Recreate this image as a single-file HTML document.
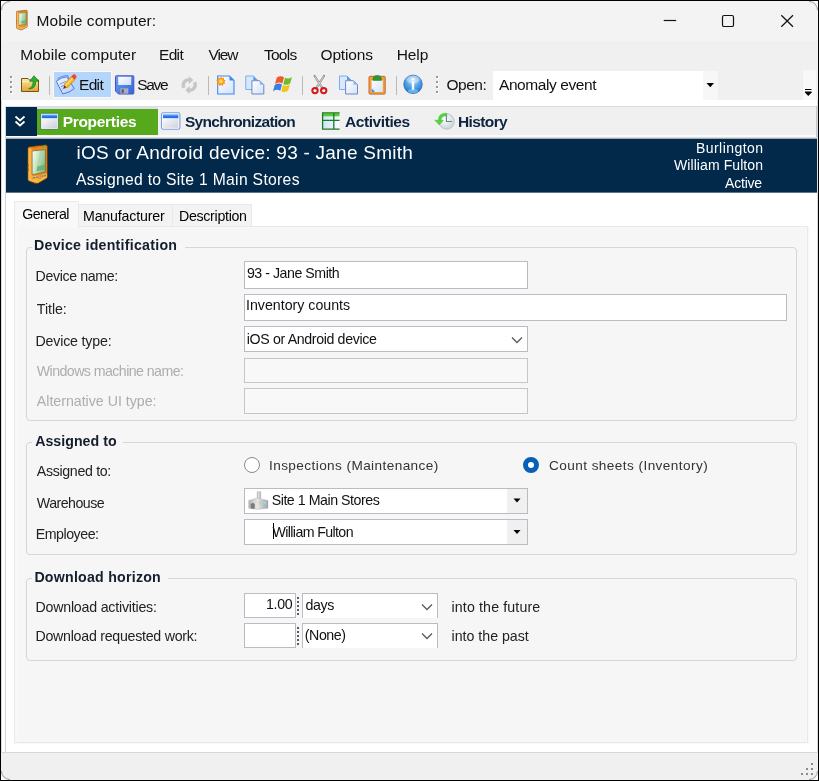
<!DOCTYPE html>
<html lang="en"><head><meta charset="utf-8"><title>Mobile computer:</title>
<style>
html,body{margin:0;padding:0}
body{width:819px;height:781px;position:relative;overflow:hidden;background:#000;font-family:"Liberation Sans",sans-serif}
.a{position:absolute;box-sizing:border-box}
.t{position:absolute;white-space:pre;line-height:1;font-family:"Liberation Sans",sans-serif}
svg{position:absolute;overflow:visible}
.inp{position:absolute;box-sizing:border-box;background:#fff;border:1px solid #b9bcc3}
.dis{background:#f8f8f8;border-color:#c4c6ca}
.grp{position:absolute;box-sizing:border-box;border:1px solid #d3d6db;border-radius:4px}
.gl{position:absolute;background:#f6f6f6;height:3px}
.sep{position:absolute;width:1px;background:#b9b9b9;top:76px;height:19px}
.dd{position:absolute;box-sizing:border-box;background:#f0f0f0}

</style></head>
<body>
<!-- outer white + window -->
<div class="a" style="left:1px;top:1px;width:817px;height:779px;background:#fff"></div>
<div class="a" id="win" style="left:1px;top:1px;width:817px;height:779px;border-radius:8px;background:#fff;overflow:hidden;box-shadow:inset 0 0 0 1px rgba(120,125,135,.28)">
  <div class="a" style="left:0;top:0;width:817px;height:40px;background:#f3f3f3"></div>
  <div class="a" style="left:0;top:40px;width:817px;height:59px;background:#f0f0f0"></div>
  <div class="a" style="left:0;top:752px;width:817px;height:27px;background:#f0f0f0"></div>
</div>
<svg style="left:0;top:0" width="819" height="781" viewBox="0 0 819 781"><g fill="none" stroke="#9aa0a8" stroke-width="1">
<path d="M1.500 10A8.500 8.500 0 0 1 10 1.500"/><path d="M809 1.500A8.500 8.500 0 0 1 817.500 10"/><path d="M817.500 771A8.500 8.500 0 0 1 809 779.500"/><path d="M10 779.500A8.500 8.500 0 0 1 1.500 771"/></g></svg>
<!-- window controls -->
<svg style="left:0;top:0" width="819" height="40" viewBox="0 0 819 40">
  <path d="M663.700 20.500H676.200" stroke="#111" stroke-width="1.200" fill="none"/>
  <rect x="722.500" y="15.500" width="11" height="11" rx="1.600" fill="none" stroke="#111" stroke-width="1.200"/>
  <path d="M781.300 15.300 793 26.700M793 15.300 781.300 26.700" stroke="#111" stroke-width="1.200" fill="none"/>
</svg>
<!-- toolbar -->
<div class="a" style="left:53px;top:71px;width:59px;height:27px;background:#b3d6fa;border:1px solid #f6fafe"></div>
<div class="sep" style="left:49px"></div>
<div class="sep" style="left:208px"></div>
<div class="sep" style="left:302px"></div>
<div class="sep" style="left:396px"></div>
<div class="a" style="left:493px;top:71px;width:210px;height:29px;background:#fff"></div>
<div class="a" style="left:703px;top:71px;width:15px;height:29px;background:#f7f7f7"></div>
<div class="a" style="left:803px;top:70px;width:13px;height:30px;background:#f8f8f8"></div>
<svg style="left:0;top:0" width="819" height="110" viewBox="0 0 819 110">
  <!-- grips -->
  <g fill="#fff"><rect x="11" y="77" width="2" height="2"/><rect x="11" y="82" width="2" height="2"/><rect x="11" y="87" width="2" height="2"/><rect x="11" y="92" width="2" height="2"/>
  <rect x="437" y="77" width="2" height="2"/><rect x="437" y="82" width="2" height="2"/><rect x="437" y="87" width="2" height="2"/><rect x="437" y="92" width="2" height="2"/></g>
  <g fill="#9a9a9a"><rect x="10" y="76" width="2" height="2"/><rect x="10" y="81" width="2" height="2"/><rect x="10" y="86" width="2" height="2"/><rect x="10" y="91" width="2" height="2"/>
  <rect x="436" y="76" width="2" height="2"/><rect x="436" y="81" width="2" height="2"/><rect x="436" y="86" width="2" height="2"/><rect x="436" y="91" width="2" height="2"/></g>
  <path d="M706.500 83h7.500l-3.750 4.200z" fill="#000"/>
  <path d="M805 89.500h6.500M805 92h6.500l-3.250 3.500z" stroke="#000" stroke-width="1" fill="#000"/>
</svg>
<!-- tab strip -->
<div class="a" style="left:5px;top:106px;width:1px;height:647px;background:#cfd5dc"></div>
<div class="a" style="left:5px;top:106px;width:812px;height:1px;background:#d9dce2"></div>
<div class="a" style="left:6px;top:107px;width:810px;height:28px;background:#f0f0f0"></div>
<div class="a" style="left:6px;top:135px;width:810px;height:2px;background:#fbfbfb"></div>
<div class="a" style="left:816px;top:106px;width:1px;height:32px;background:#c5cad1"></div>
<div class="a" style="left:6px;top:107px;width:31px;height:29px;background:#02284a"></div>
<div class="a" style="left:37px;top:107px;width:121px;height:2px;background:#dfdfe6"></div>
<div class="a" style="left:37px;top:109px;width:121px;height:26px;background:#56a81c"></div>
<div class="a" style="left:6px;top:137px;width:811px;height:1px;background:#dcdcde"></div>
<div class="a" style="left:6px;top:138px;width:811px;height:1px;background:#a4acb6"></div>
<div class="a" style="left:6px;top:139px;width:811px;height:53px;background:#02284a"></div>
<div class="a" style="left:6px;top:192px;width:811px;height:1px;background:#60748a"></div>
<svg style="left:14px;top:114px" width="12" height="14" viewBox="0 0 12 14"><path d="M1.500 2.500l4.500 4 4.500-4M1.500 7.500l4.500 4 4.500-4" stroke="#fff" stroke-width="1.700" fill="none"/></svg>
<!-- page tabs -->
<div class="a" style="left:78px;top:204px;width:95px;height:23px;background:#f3f3f3;border:1px solid #e9e9e9;border-bottom:none"></div>
<div class="a" style="left:172px;top:204px;width:80px;height:23px;background:#f3f3f3;border:1px solid #e9e9e9;border-bottom:none"></div>
<div class="a" style="left:14px;top:226px;width:796px;height:518px;background:#f9f9f9"></div>
<div class="a" style="left:14px;top:226px;width:794px;height:517px;background:#f8f8f8;border:1px solid #e9e9e9"></div>
<div class="a" style="left:18px;top:228px;width:788px;height:513px;background:#f6f6f6"></div>
<div class="a" style="left:14px;top:201px;width:65px;height:27px;background:#f8f8f8;border:1px solid #e9e9e9;border-bottom:none"></div>
<!-- status bar -->
<div class="a" style="left:2px;top:752px;width:815px;height:1px;background:#d3d8de"></div>
<svg style="left:800px;top:762px" width="14" height="14" viewBox="0 0 14 14"><g fill="#8a8a8a"><rect x="11" y="1" width="2" height="2"/><rect x="6" y="6" width="2" height="2"/><rect x="11" y="6" width="2" height="2"/><rect x="1" y="11" width="2" height="2"/><rect x="6" y="11" width="2" height="2"/><rect x="11" y="11" width="2" height="2"/></g></svg>
<!-- group boxes -->
<div class="grp" style="left:26px;top:247px;width:771px;height:174px"></div>
<div class="gl" style="left:32px;top:246px;width:153px"></div>
<div class="grp" style="left:26px;top:442px;width:771px;height:113px"></div>
<div class="gl" style="left:32px;top:441px;width:91px"></div>
<div class="grp" style="left:26px;top:578px;width:771px;height:83px"></div>
<div class="gl" style="left:32px;top:577px;width:136px"></div>
<!-- inputs -->
<div class="inp" style="left:244px;top:261px;width:284px;height:28px"></div>
<div class="inp" style="left:244px;top:294px;width:543px;height:27px"></div>
<div class="inp" style="left:244px;top:326px;width:284px;height:26px"></div>
<div class="inp dis" style="left:244px;top:358px;width:284px;height:25px"></div>
<div class="inp dis" style="left:244px;top:388px;width:284px;height:26px"></div>
<svg style="left:511px;top:336px" width="12" height="8" viewBox="0 0 12 8"><path d="M1 1.500l5 5 5-5" stroke="#5a5a5a" stroke-width="1.300" fill="none"/></svg>
<!-- radios -->
<div class="a" style="left:244px;top:457px;width:16px;height:16px;border-radius:50%;border:1px solid #8a8a8a;background:#fff"></div>
<div class="a" style="left:523px;top:457px;width:16px;height:16px;border-radius:50%;border:5px solid #0560b6;background:#fff"></div>
<!-- combos -->
<div class="inp" style="left:244px;top:488px;width:284px;height:26px"></div>
<div class="dd" style="left:507px;top:489px;width:20px;height:24px"></div>
<div class="inp" style="left:244px;top:519px;width:284px;height:26px"></div>
<div class="dd" style="left:507px;top:520px;width:20px;height:24px"></div>
<svg style="left:513px;top:498px" width="8" height="36" viewBox="0 0 8 36"><path d="M0.500 0.500h7l-3.500 4zM0.500 32h7l-3.500 4z" fill="#000"/></svg>
<div class="a" style="left:273px;top:523px;width:1px;height:16px;background:#000"></div>
<!-- numeric + unit -->
<div class="inp" style="left:244px;top:593px;width:52px;height:25px"></div>
<div class="inp" style="left:244px;top:623px;width:52px;height:25px"></div>
<div class="a" style="left:302px;top:593px;width:136px;height:25px;background:#fff;border:1px solid #b9bcc3;border-bottom:none"></div>
<div class="a" style="left:302px;top:623px;width:136px;height:25px;background:#fff;border:1px solid #b9bcc3;border-bottom:none"></div>
<svg style="left:296px;top:595px" width="4" height="52" viewBox="0 0 4 52"><g fill="#5c5c5c"><rect x="1" y="2" width="2" height="2"/><rect x="1" y="6" width="2" height="2"/><rect x="1" y="10" width="2" height="2"/><rect x="1" y="14" width="2" height="2"/><rect x="1" y="18" width="2" height="2"/>
<rect x="1" y="32" width="2" height="2"/><rect x="1" y="36" width="2" height="2"/><rect x="1" y="40" width="2" height="2"/><rect x="1" y="44" width="2" height="2"/><rect x="1" y="48" width="2" height="2"/></g></svg>
<svg style="left:421px;top:603px" width="12" height="38" viewBox="0 0 12 38"><path d="M1 1.500l5 5 5-5M1 30.500l5 5 5-5" stroke="#5a5a5a" stroke-width="1.300" fill="none"/></svg>
<svg style="left:0;top:0" width="819" height="781" viewBox="0 0 819 781">
<defs>
  <linearGradient id="pb" x1="0" x2="1" y1="0" y2="0"><stop offset="0" stop-color="#f9b040"/><stop offset=".22" stop-color="#f39a26"/><stop offset=".3" stop-color="#ec8618"/><stop offset="1" stop-color="#ee8e1e"/></linearGradient>
  <linearGradient id="ps" x1="0" y1="0" x2="1" y2=".45"><stop offset="0" stop-color="#fbfffa"/><stop offset=".45" stop-color="#c9e8c6"/><stop offset="1" stop-color="#86bf8a"/></linearGradient>
  <linearGradient id="edp" x1="0" y1="0" x2="1" y2="1"><stop offset="0" stop-color="#f4f8ff"/><stop offset="1" stop-color="#b4c8f2"/></linearGradient>
  <linearGradient id="fold" x1="0" y1="0" x2="0" y2="1"><stop offset="0" stop-color="#fbeaa8"/><stop offset="1" stop-color="#dfa42c"/></linearGradient>
  <linearGradient id="sv" x1="0" y1="0" x2="1" y2="1"><stop offset="0" stop-color="#6ea0f8"/><stop offset="1" stop-color="#3464d8"/></linearGradient>
  <linearGradient id="svl" x1="0" y1="0" x2="1" y2="1"><stop offset="0" stop-color="#ffffff"/><stop offset="1" stop-color="#cfdcf6"/></linearGradient>
  <linearGradient id="pg" x1="0" y1="0" x2="1" y2="1"><stop offset="0" stop-color="#ffffff"/><stop offset="1" stop-color="#d2e2fa"/></linearGradient>
  <linearGradient id="wt" x1="0" y1="0" x2="0" y2="1"><stop offset="0" stop-color="#8cc0ff"/><stop offset=".5" stop-color="#2a7af0"/><stop offset="1" stop-color="#1864e0"/></linearGradient>
  <linearGradient id="wb" x1="0" y1="0" x2="1" y2="1"><stop offset="0" stop-color="#fafafc"/><stop offset="1" stop-color="#cfcfde"/></linearGradient>
  <linearGradient id="tc" x1="0" y1="0" x2="1" y2="0"><stop offset="0" stop-color="#cfe3fb"/><stop offset="1" stop-color="#fafcff"/></linearGradient>
  <radialGradient id="inf" cx=".5" cy=".3" r=".75"><stop offset="0" stop-color="#cfe6f9"/><stop offset=".45" stop-color="#5aa8ea"/><stop offset=".8" stop-color="#2a80d8"/><stop offset="1" stop-color="#1c62b4"/></radialGradient>
  <radialGradient id="clk" cx=".4" cy=".35" r=".7"><stop offset="0" stop-color="#ffffff"/><stop offset="1" stop-color="#c8d2d8"/></radialGradient>
  <radialGradient id="sun" cx=".5" cy=".5" r=".5"><stop offset="0" stop-color="#fff6a0"/><stop offset=".45" stop-color="#ffc83a"/><stop offset="1" stop-color="#ff8c14"/></radialGradient>
  <linearGradient id="wh" x1="0" y1="0" x2="1" y2="0"><stop offset="0" stop-color="#b2b2b2"/><stop offset=".45" stop-color="#e6e6e6"/><stop offset="1" stop-color="#a2a2a2"/></linearGradient>
    </defs>
<!-- title icon -->
<g transform="translate(16 10) scale(.535 .5)">
    <path d="M1 3.700Q1 2.700 2 2.500L19 .500Q21 .300 21 2V33Q21 34 20 34.600L11.500 39.300Q10 40 8 39.400L2 37Q1 36.600 1 35.600Z" fill="url(#pb)" stroke="#6e3a06" stroke-width="1"/>
    <path d="M1.500 4 4.700 4.500V37.600L1.500 36.200Z" fill="#fab648"/>
    <path d="M4.700 32.500 20.600 29.800V33.600L11 39 4.700 37.600Z" fill="#f7b545"/>
    <path d="M2 2.900 19.200 .900 20.600 2.200 4.700 4.300Z" fill="#e07c14"/>
    <path d="M5.300 6.600 19 5.300V28L5.300 30.600Z" fill="url(#ps)" stroke="#6a5232" stroke-width=".6"/>
    <path d="M9.800 27.200 18.600 25.300V20.600L10.600 22.200Z" fill="#6aae70" opacity=".85"/>
    <path d="M13.500 7 10.500 22 12 22 15.500 6.800Z" fill="#a4d6a6" opacity=".8"/>
    <rect x="15.600" y="1.800" width="3" height="1.900" fill="#58c040" transform="rotate(-6 17 2.700)"/>
    <path d="M5.800 33.400l2.600-.5v1.300l-2.600.5zM9.200 32.800l2.200-.4v1.300l-2.200.4zM15 31.600l2-.4v1.300l-2 .4zM17.600 31.100l2-.4v1.300l-2 .4z" fill="#8a6a7a"/>
    <path d="M12 31.600l2.200-.4v3.400l-2.200.4z" fill="#d8a050" stroke="#a87020" stroke-width=".3"/>
    <path d="M1.200 20v2.500M1.200 24.500v2.500" stroke="#7a4a10" stroke-width=".8"/>
</g>
<!-- header icon -->
<g transform="translate(27 144.500) scale(.97 .985)">
    <path d="M1 3.700Q1 2.700 2 2.500L19 .500Q21 .300 21 2V33Q21 34 20 34.600L11.500 39.300Q10 40 8 39.400L2 37Q1 36.600 1 35.600Z" fill="url(#pb)" stroke="#6e3a06" stroke-width="1"/>
    <path d="M1.500 4 4.700 4.500V37.600L1.500 36.200Z" fill="#fab648"/>
    <path d="M4.700 32.500 20.600 29.800V33.600L11 39 4.700 37.600Z" fill="#f7b545"/>
    <path d="M2 2.900 19.200 .900 20.600 2.200 4.700 4.300Z" fill="#e07c14"/>
    <path d="M5.300 6.600 19 5.300V28L5.300 30.600Z" fill="url(#ps)" stroke="#6a5232" stroke-width=".6"/>
    <path d="M9.800 27.200 18.600 25.300V20.600L10.600 22.200Z" fill="#6aae70" opacity=".85"/>
    <path d="M13.500 7 10.500 22 12 22 15.500 6.800Z" fill="#a4d6a6" opacity=".8"/>
    <rect x="15.600" y="1.800" width="3" height="1.900" fill="#58c040" transform="rotate(-6 17 2.700)"/>
    <path d="M5.800 33.400l2.600-.5v1.300l-2.600.5zM9.200 32.800l2.200-.4v1.300l-2.200.4zM15 31.600l2-.4v1.300l-2 .4zM17.600 31.100l2-.4v1.300l-2 .4z" fill="#8a6a7a"/>
    <path d="M12 31.600l2.200-.4v3.400l-2.200.4z" fill="#d8a050" stroke="#a87020" stroke-width=".3"/>
    <path d="M1.200 20v2.500M1.200 24.500v2.500" stroke="#7a4a10" stroke-width=".8"/>
</g>
<!-- folder up -->
<path d="M21.500 78.500H28L29.500 80H38.500V91.500H21.500Z" fill="url(#fold)" stroke="#73560f" stroke-width="1"/>
<path d="M22 81.500H38" stroke="#fff6cc" stroke-width="1" opacity=".8"/>
<path d="M28.600 88.800Q33 87.800 33.200 81.300H29.600L34 75.700 38.800 81.300H35.800Q35.800 89.300 28.600 88.800Z" fill="#2fae2f" stroke="#17791a" stroke-width=".7"/>
<!-- edit icon -->
<path d="M57.800 78.600Q62 75.600 67.600 75.400L72 86.500Q67 88.500 62.500 91.500Z" fill="#c4d4f6" stroke="#5a80e4" stroke-width=".9"/>
<path d="M56.300 81.300Q61 77.200 66.800 76.800L74.300 88.600Q69.500 92.800 62.800 94Z" fill="url(#edp)" stroke="#4f78e2" stroke-width="1"/>
<path d="M59.800 84.200l6-2.700M61 86.700l6.200-2.800M62.300 89.200l6.200-2.800" stroke="#7396ea" stroke-width="1"/>
<path d="M63.600 88.300 64.600 84 71.300 76.600 74.800 79.800 68 87.200Z" fill="#f9b61c" stroke="#c87c0c" stroke-width=".6"/>
<path d="M65.700 85.600 72.600 78.100" stroke="#ffe58e" stroke-width="1.100"/>
<path d="M71.300 76.600 73.200 74.600Q74.400 73.800 75.700 74.900 77 76.200 76.300 77.600L74.800 79.800Z" fill="#f0452e"/>
<path d="M63.600 88.300 64.300 85.400 66.300 87.300Z" fill="#2c2c2c"/>
<!-- save -->
<path d="M115.500 76.500Q115.500 75.800 116.200 75.800H133Q133.800 75.800 133.800 76.500V93.300Q133.800 94 133 94H118.500L115.500 91Z" fill="url(#sv)" stroke="#4452c4" stroke-width="1"/>
<rect x="118.200" y="76.800" width="13" height="8.200" fill="url(#svl)"/>
<rect x="120.300" y="88.300" width="8" height="5.300" fill="#a9adbc"/>
<rect x="121.600" y="89.300" width="2.200" height="3.600" fill="#585c70"/>
<!-- refresh disabled -->
<g fill="#c6c6c6">
<path d="M182.300 88.500A7 7 0 0 1 188.800 78.300V76L193.300 80 188.800 84V81.600A3.600 3.600 0 0 0 185.600 87.300Z"/>
<path d="M196.200 81.500A7 7 0 0 1 189.700 91.700V94L185.200 90 189.700 86V88.400A3.600 3.600 0 0 0 192.900 82.700Z"/>
</g>
<!-- new doc -->
<path d="M217.700 76H229.500L234 80.500V94H217.700Z" fill="url(#pg)" stroke="#3b88f2" stroke-width="1.100"/>
<path d="M229.500 76V80.500H234Z" fill="#3b88f2"/>
<path d="M221 76.300l1 2 2.100-.8-.4 2.200 2.100.7-1.600 1.500 1.200 1.900-2.200.1-.3 2.200-1.900-1.200-1.900 1.200-.3-2.200-2.200-.1 1.200-1.900-1.600-1.500 2.100-.7-.4-2.200 2.100.8z" fill="#ff9418"/>
<circle cx="221" cy="81.300" r="3.300" fill="url(#sun)"/>
<!-- copy icons -->
<g transform="translate(245.300 75.500)">
    <path d="M.500 .500H8L12 4.500V14H.500Z" fill="#dbe8fc" stroke="#76aef2" stroke-width="1"/>
    <path d="M8 .500V4.500H12Z" fill="#5c9af0"/>
    <path d="M6.600 5.200H14.500L18.500 9.200V18.500H6.600Z" fill="url(#pg)" stroke="#6d88c4" stroke-width="1"/>
    <path d="M14.500 5.200V9.200H18.500Z" fill="#9ab4e4"/>
</g>
<g transform="translate(339 75.500)">
    <path d="M.500 .500H8L12 4.500V14H.500Z" fill="#dbe8fc" stroke="#76aef2" stroke-width="1"/>
    <path d="M8 .500V4.500H12Z" fill="#5c9af0"/>
    <path d="M6.600 5.200H14.500L18.500 9.200V18.500H6.600Z" fill="url(#pg)" stroke="#6d88c4" stroke-width="1"/>
    <path d="M14.500 5.200V9.200H18.500Z" fill="#9ab4e4"/>
</g>
<!-- windows logo -->
<path d="M276.800 77.600Q280.500 75 284 77.200L282.300 83.400Q278.900 81.500 275 84Z" fill="#ef5b25"/>
<path d="M285 77.700Q288.500 79.700 292 76.900L290.200 83.200Q286.700 85.900 283.300 83.900Z" fill="#6cbd2b"/>
<path d="M274.700 85Q278.500 82.500 282 84.500L280.300 90.700Q276.800 88.700 273 91.200Z" fill="#3b7de2"/>
<path d="M283 85Q286.500 87 290 84.300L288.200 90.500Q284.700 93.200 281.300 91.200Z" fill="#f4c41e"/>
<!-- scissors -->
<path d="M314.600 76 322.600 88.500M324 76 316 88.500" stroke="#8c8c8c" stroke-width="2.200" stroke-linecap="round"/>
<path d="M314.800 76.300 322 87.500M323.800 76.300 316.600 87.500" stroke="#e8e8e8" stroke-width=".8"/>
<circle cx="315" cy="90.600" r="2.700" fill="none" stroke="#d41a1a" stroke-width="2"/>
<circle cx="323.700" cy="90.600" r="2.700" fill="none" stroke="#d41a1a" stroke-width="2"/>
<!-- paste -->
<rect x="369" y="76.300" width="16.200" height="17.800" rx="1" fill="#f5a132" stroke="#c4663e" stroke-width="1"/>
<rect x="371.600" y="80" width="11.200" height="12" fill="url(#pg)"/>
<path d="M371.600 88.600H375V92H371.600Z" fill="#d6e4fa"/><path d="M371.600 88.600 375 92H371.600Z" fill="#3b88f2"/>
<path d="M372.800 80.400Q372.800 75.500 377.200 75.500T381.600 80.400Z" fill="#2c9a30" stroke="#1c6e20" stroke-width=".5"/>
<!-- info -->
<circle cx="413" cy="84.300" r="9.300" fill="url(#inf)" stroke="#2a62a8" stroke-width=".6"/>
<ellipse cx="413" cy="79.600" rx="6.800" ry="3.800" fill="#fff" opacity=".35"/>
<ellipse cx="413" cy="91" rx="5" ry="2" fill="#8fe0ff" opacity=".55"/>
<rect x="411.900" y="81.800" width="2.300" height="8" rx=".6" fill="#fff"/><circle cx="413" cy="79.300" r="1.300" fill="#fff"/>
<!-- tabstrip window icons -->
<rect x="40.700" y="113.300" width="17.600" height="16" rx=".8" fill="#fff" stroke="#2c6a3c" stroke-width=".7"/>
<rect x="41.900" y="114.400" width="15.200" height="4" fill="url(#wt)"/>
<rect x="41.900" y="118.400" width="15.200" height="9.800" fill="url(#wb)"/>
<rect x="161.500" y="112.700" width="18.400" height="16.600" rx="1.800" fill="#fff" stroke="#7a9ade" stroke-width="1.100"/>
<rect x="163" y="114.200" width="15.400" height="4.200" fill="url(#wt)"/>
<rect x="163" y="118.400" width="15.400" height="9.400" fill="url(#wb)"/>
<!-- table icon -->
<rect x="323" y="113.300" width="16.500" height="15.500" fill="url(#tc)"/>
<rect x="323" y="113.300" width="16.500" height="3" fill="#5cc832"/>
<path d="M339.600 112.900H322.600V129.100H339.600M322.600 120.400H339.600M333.800 112.900V129.100" fill="none" stroke="#1d7a22" stroke-width="1.300"/>
<!-- history icon -->
<circle cx="446.600" cy="121.500" r="7.700" fill="url(#clk)" stroke="#b4bcc4" stroke-width=".8"/>
<path d="M446.400 114.500V121.500H452" fill="none" stroke="#6c7c90" stroke-width="1.100"/>
<path d="M446.800 113.200Q438.500 112.600 438.300 120.200L434.700 120.100 439.300 125 443.500 120.300 440.900 120.300Q441.200 115.600 446.800 115.800Z" fill="#52d43c" stroke="#3cb82c" stroke-width=".4"/>
<!-- warehouse -->
<path d="M257.200 491.700H260.700V499H257.200Z" fill="url(#wh)" stroke="#a8a8a8" stroke-width=".4"/>
<path d="M248.700 500.500 257 498 268 500.500V508.200L257.500 509.500 248.700 508.200Z" fill="url(#wh)" stroke="#b0b0b0" stroke-width=".4"/>
<path d="M250.700 508.400V504.500Q250.700 503 252.700 503T254.700 504.500V508.800Z" fill="#7a7a7a"/>
<rect x="259.600" y="501.400" width="6.600" height="3" fill="#9ad0f4"/><circle cx="261.200" cy="502.900" r="1.100" fill="#f4d23a"/>
</svg>

<!-- text -->
<div style="will-change:transform">
<span class="t" style="left:36.6px;top:12.9px;font-size:15.5px;font-weight:400;color:#111;letter-spacing:0.04px;">Mobile computer:</span>
<span class="t" style="left:20.2px;top:46.9px;font-size:15.5px;font-weight:400;color:#111;letter-spacing:0.10px;">Mobile computer</span>
<span class="t" style="left:159.0px;top:46.9px;font-size:15.5px;font-weight:400;color:#111;letter-spacing:-0.67px;">Edit</span>
<span class="t" style="left:208.6px;top:46.9px;font-size:15.5px;font-weight:400;color:#111;letter-spacing:-1.13px;">View</span>
<span class="t" style="left:264.0px;top:46.9px;font-size:15.5px;font-weight:400;color:#111;letter-spacing:-0.75px;">Tools</span>
<span class="t" style="left:320.5px;top:46.9px;font-size:15.5px;font-weight:400;color:#111;letter-spacing:-0.17px;">Options</span>
<span class="t" style="left:396.8px;top:46.9px;font-size:15.5px;font-weight:400;color:#111;letter-spacing:-0.13px;">Help</span>
<span class="t" style="left:79.0px;top:76.9px;font-size:15.5px;font-weight:400;color:#111;letter-spacing:-0.67px;">Edit</span>
<span class="t" style="left:137.2px;top:76.9px;font-size:15.5px;font-weight:400;color:#111;letter-spacing:-1.33px;">Save</span>
<span class="t" style="left:446.5px;top:76.9px;font-size:15.5px;font-weight:400;color:#111;letter-spacing:-0.50px;">Open:</span>
<span class="t" style="left:499.0px;top:76.9px;font-size:15.5px;font-weight:400;color:#111;letter-spacing:-0.42px;">Anomaly event</span>
<span class="t" style="left:62.7px;top:113.9px;font-size:15.5px;font-weight:700;color:#fff;letter-spacing:-0.31px;">Properties</span>
<span class="t" style="left:184.9px;top:113.9px;font-size:15.5px;font-weight:700;color:#0b2440;letter-spacing:-0.69px;">Synchronization</span>
<span class="t" style="left:344.9px;top:113.9px;font-size:15.5px;font-weight:700;color:#0b2440;letter-spacing:-0.40px;">Activities</span>
<span class="t" style="left:457.9px;top:113.9px;font-size:15.5px;font-weight:700;color:#0b2440;letter-spacing:-0.60px;">History</span>
<span class="t" style="left:76.5px;top:143.3px;font-size:19px;font-weight:400;color:#fff;letter-spacing:0.24px;">iOS or Android device: 93 - Jane Smith</span>
<span class="t" style="left:76.0px;top:171.9px;font-size:15.7px;font-weight:400;color:#fff;letter-spacing:0.31px;">Assigned to Site 1 Main Stores</span>
<span class="t" style="left:696.0px;top:141.1px;font-size:14px;font-weight:400;color:#fff;letter-spacing:0.44px;">Burlington</span>
<span class="t" style="left:674.0px;top:158.1px;font-size:14px;font-weight:400;color:#fff;letter-spacing:0.08px;">William Fulton</span>
<span class="t" style="left:725.0px;top:175.6px;font-size:14px;font-weight:400;color:#fff;letter-spacing:-0.20px;">Active</span>
<span class="t" style="left:22.3px;top:207.0px;font-size:14.2px;font-weight:400;color:#000;letter-spacing:-0.57px;">General</span>
<span class="t" style="left:83.0px;top:208.8px;font-size:14.2px;font-weight:400;color:#000;letter-spacing:-0.18px;">Manufacturer</span>
<span class="t" style="left:179.0px;top:208.8px;font-size:14.2px;font-weight:400;color:#000;letter-spacing:-0.30px;">Description</span>
<span class="t" style="left:34.0px;top:238.0px;font-size:14.2px;font-weight:700;color:#141e2c;letter-spacing:0.25px;">Device identification</span>
<span class="t" style="left:35.2px;top:433.9px;font-size:14.2px;font-weight:700;color:#141e2c;letter-spacing:0.02px;">Assigned to</span>
<span class="t" style="left:34.4px;top:569.5px;font-size:14.2px;font-weight:700;color:#141e2c;letter-spacing:0.23px;">Download horizon</span>
<span class="t" style="left:35.5px;top:269.2px;font-size:14.2px;font-weight:400;color:#222;letter-spacing:-0.36px;">Device name:</span>
<span class="t" style="left:36.8px;top:301.5px;font-size:14.2px;font-weight:400;color:#222;letter-spacing:-0.04px;">Title:</span>
<span class="t" style="left:35.5px;top:334.0px;font-size:14.2px;font-weight:400;color:#222;letter-spacing:-0.18px;">Device type:</span>
<span class="t" style="left:36.8px;top:364.1px;font-size:14.2px;font-weight:400;color:#adadad;letter-spacing:-0.57px;">Windows machine name:</span>
<span class="t" style="left:36.8px;top:393.8px;font-size:14.2px;font-weight:400;color:#adadad;letter-spacing:-0.01px;">Alternative UI type:</span>
<span class="t" style="left:36.8px;top:463.6px;font-size:14.2px;font-weight:400;color:#222;letter-spacing:-0.33px;">Assigned to:</span>
<span class="t" style="left:36.8px;top:495.6px;font-size:14.2px;font-weight:400;color:#222;letter-spacing:-0.52px;">Warehouse</span>
<span class="t" style="left:35.8px;top:526.5px;font-size:14.2px;font-weight:400;color:#222;letter-spacing:-0.48px;">Employee:</span>
<span class="t" style="left:35.5px;top:599.6px;font-size:14.2px;font-weight:400;color:#222;letter-spacing:-0.21px;">Download activities:</span>
<span class="t" style="left:35.5px;top:628.6px;font-size:14.2px;font-weight:400;color:#222;letter-spacing:-0.26px;">Download requested work:</span>
<span class="t" style="left:246.9px;top:265.8px;font-size:14.2px;font-weight:400;color:#111;letter-spacing:-0.47px;">93 - Jane Smith</span>
<span class="t" style="left:246.0px;top:298.1px;font-size:14.2px;font-weight:400;color:#111;letter-spacing:0.00px;">Inventory counts</span>
<span class="t" style="left:246.8px;top:331.7px;font-size:14.2px;font-weight:400;color:#111;letter-spacing:-0.36px;">iOS or Android device</span>
<span class="t" style="left:271.7px;top:492.5px;font-size:14.2px;font-weight:400;color:#111;letter-spacing:-0.46px;">Site 1 Main Stores</span>
<span class="t" style="left:272.5px;top:525.0px;font-size:14.2px;font-weight:400;color:#111;letter-spacing:-0.62px;">William Fulton</span>
<span class="t" style="left:266.0px;top:596.8px;font-size:14.2px;font-weight:400;color:#111;letter-spacing:-0.33px;">1.00</span>
<span class="t" style="left:305.5px;top:597.6px;font-size:14.2px;font-weight:400;color:#111;letter-spacing:-0.40px;">days</span>
<span class="t" style="left:304.8px;top:627.7px;font-size:14.2px;font-weight:400;color:#111;letter-spacing:-0.44px;">(None)</span>
<span class="t" style="left:451.5px;top:599.6px;font-size:14.2px;font-weight:400;color:#222;letter-spacing:0.14px;">into the future</span>
<span class="t" style="left:451.5px;top:628.6px;font-size:14.2px;font-weight:400;color:#222;letter-spacing:0.00px;">into the past</span>
<span class="t" style="left:269.0px;top:458.5px;font-size:13.6px;font-weight:400;color:#333;letter-spacing:0.41px;">Inspections (Maintenance)</span>
<span class="t" style="left:549.0px;top:458.5px;font-size:13.6px;font-weight:400;color:#333;letter-spacing:0.43px;">Count sheets (Inventory)</span>
</div>
</body></html>
